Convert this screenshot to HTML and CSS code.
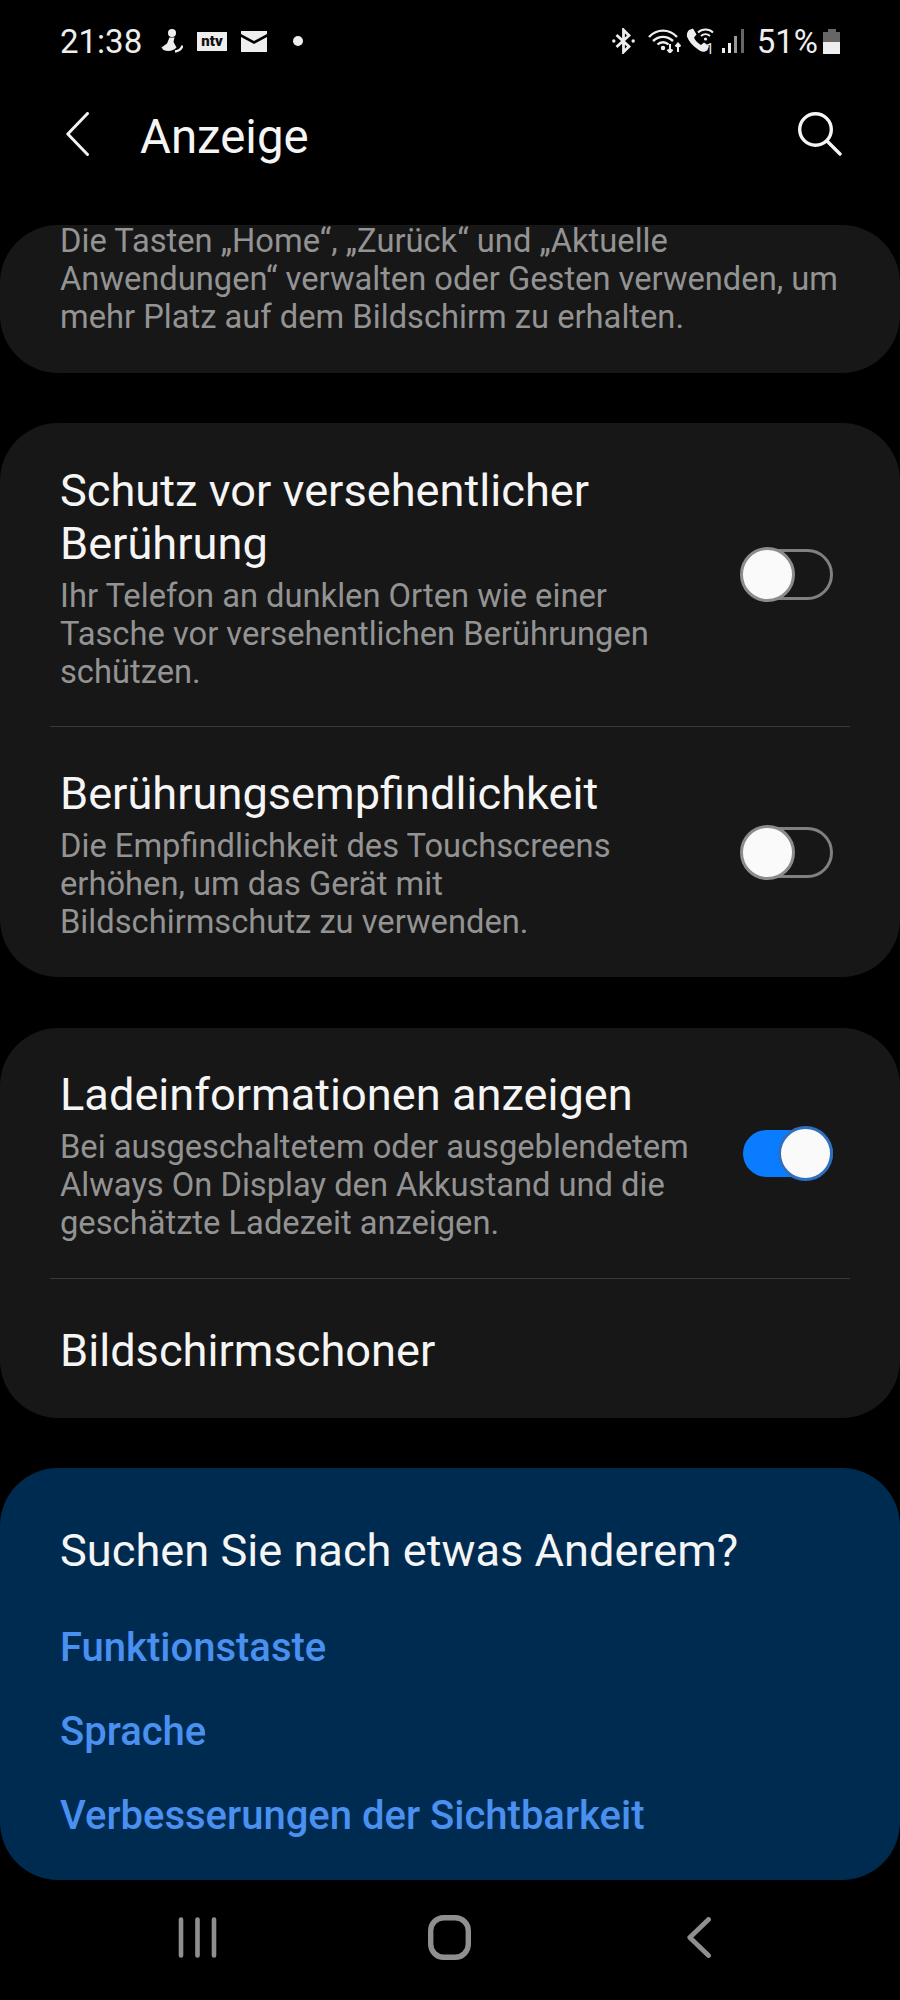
FILE: index.html
```html
<!DOCTYPE html>
<html lang="de">
<head>
  <meta charset="UTF-8">
  <title>Anzeige</title>
  <meta name="viewport" content="width=device-width, initial-scale=1.0">
  <link rel="stylesheet" href="styles.css">
</head>
<body>
  <div class="phone">
    <!-- Status bar -->
    <div class="status">
      <div class="status-left">
        <span class="clock">21:38</span>
        <svg class="ic-health" viewBox="0 0 22 24" width="22" height="24"><circle cx="11" cy="4" r="4" fill="#eee"/><path d="M8.500 8.500h5L12.500 13l3 5.500c-3 3.500-8.500 4.500-13 2.500L.5 18.500 6 14.500z" fill="#eee"/><path d="M14 22.500c3.500-.5 6.500-2.500 7.500-6" fill="none" stroke="#eee" stroke-width="2.400"/></svg>
        <span class="ntv">ntv</span>
        <svg class="ic-mail" viewBox="0 0 26 21" width="26" height="21"><path d="M0 0h26v3L13 10 0 3z" fill="#eee"/><path d="M0 6l13 7 13-7v15H0z" fill="#eee"/></svg>
        <span class="dot"></span>
      </div>
      <div class="status-right">
        <svg class="ic-bt" viewBox="0 0 23 26" width="23" height="26" fill="none" stroke="#eee" stroke-width="2.800"><path d="M4.500 7L17 18.500 11.500 24V2L17 7.500 4.500 19"/><circle cx="1.800" cy="13" r="1.700" fill="#eee" stroke="none"/><circle cx="21.200" cy="13" r="1.700" fill="#eee" stroke="none"/></svg>
        <svg class="ic-wifi" viewBox="0 0 33 24" width="33" height="24" fill="none" stroke="#eee" stroke-width="2.400"><path d="M1 8c8-8.500 20-8.500 28 0"/><path d="M5 12c6-5.500 14-5.500 20 0"/><path d="M9.500 15.500c3-3 8-3 11 0"/><circle cx="15" cy="19" r="2.200" fill="#eee" stroke="none"/><path d="M22 15v8M19.500 20.500l2.500 3 2.500-3M30 23v-8M27.500 17.500l2.500-3 2.500 3" stroke-width="2"/></svg>
        <div class="call">
          <svg viewBox="0 0 28 24" width="28" height="24"><path d="M3 2l4-1.500 3.500 6-2.500 3c1 3 4 6 7 7.500l3-2.500 5 3.500-1.500 4c-2 2-5 2.500-8 .5C8 19 3 14 1 8.500 .5 6 1.500 3.500 3 2z" fill="#eee"/><g fill="none" stroke="#eee" stroke-width="1.800"><path d="M12 4.500c4-4 11-4 15 0"/><path d="M15 8c2.500-2.500 6.500-2.500 9 0"/></g><circle cx="19.500" cy="11" r="1.600" fill="#eee"/></svg>
          <span class="sim">1</span>
        </div>
        <div class="signal">
          <i class="bar b1"></i><i class="bar b2"></i><i class="bar b3"></i><i class="bar b4"></i>
        </div>
        <span class="pct">51%</span>
        <div class="battery"><i class="cap"></i><i class="cell-top"></i><i class="cell-low"></i></div>
      </div>
    </div>

    <!-- Header -->
    <div class="header">
      <svg class="back" viewBox="0 0 23 44" width="23" height="44" fill="none" stroke="#f2f2f2" stroke-width="3" stroke-linecap="round" stroke-linejoin="round"><path d="M21.500 1.500L1.800 22l19.700 20.500"/></svg>
      <h1>Anzeige</h1>
      <svg class="search" viewBox="0 0 44 44" width="44" height="44" fill="none" stroke="#f5f5f5" stroke-width="3.400" stroke-linecap="round"><circle cx="17.500" cy="17.500" r="15.800"/><path d="M29 29l13 13"/></svg>
    </div>

    <div class="list">
      <div class="card card-top">
        <p class="sub">Die Tasten „Home“, „Zurück“ und „Aktuelle Anwendungen“ verwalten oder Gesten verwenden, um mehr Platz auf dem Bildschirm zu erhalten.</p>
      </div>

      <div class="card">
        <div class="row row-a">
          <div class="row-text">
            <div class="title">Schutz vor versehentlicher Berührung</div>
            <p class="sub">Ihr Telefon an dunklen Orten wie einer Tasche vor versehentlichen Berührungen schützen.</p>
          </div>
          <div class="switch"><span class="knob"></span></div>
        </div>
        <div class="divider"></div>
        <div class="row row-b">
          <div class="row-text">
            <div class="title">Berührungsempfindlichkeit</div>
            <p class="sub">Die Empfindlichkeit des Touchscreens erhöhen, um das Gerät mit Bildschirmschutz zu verwenden.</p>
          </div>
          <div class="switch"><span class="knob"></span></div>
        </div>
      </div>

      <div class="card card-charge">
        <div class="row row-c">
          <div class="row-text">
            <div class="title">Ladeinformationen anzeigen</div>
            <p class="sub">Bei ausgeschaltetem oder ausgeblendetem Always On Display den Akkustand und die geschätzte Ladezeit anzeigen.</p>
          </div>
          <div class="switch on"><span class="knob"></span></div>
        </div>
        <div class="divider"></div>
        <div class="row row-d">
          <div class="title">Bildschirmschoner</div>
        </div>
      </div>

      <div class="card card-blue">
        <div class="title">Suchen Sie nach etwas Anderem?</div>
        <a class="link">Funktionstaste</a>
        <a class="link">Sprache</a>
        <a class="link">Verbesserungen der Sichtbarkeit</a>
      </div>
    </div>

    <!-- Nav bar -->
    <div class="nav">
      <svg viewBox="0 0 39 41" width="39" height="41" fill="none" stroke="#8f8f8f" stroke-width="4.600" stroke-linecap="round"><path d="M3 2.500v36M19.500 2.500v36M36 2.500v36"/></svg>
      <svg class="nav-home" viewBox="0 0 43 45" width="43" height="45" fill="none" stroke="#8f8f8f" stroke-width="5.400"><rect x="2.700" y="2.700" width="37.600" height="39.600" rx="13"/></svg>
      <svg class="nav-back" viewBox="0 0 24 41" width="24" height="41" fill="none" stroke="#8f8f8f" stroke-width="4.800" stroke-linecap="round" stroke-linejoin="round"><path d="M21.500 2.500L2.800 20.500l18.700 18"/></svg>
    </div>
  </div>
</body>
</html>
```

FILE: styles.css
```css
* { box-sizing: border-box; }
body { margin: 0; background: #000; font-family: Roboto, "Liberation Sans", sans-serif; color: #f5f5f5; }
.phone { width: 900px; height: 2000px; background: #000; overflow: hidden; display: flex; flex-direction: column; }

.status { height: 80px; padding: 2px 60px 0 60px; display: flex; justify-content: space-between; align-items: center; }
.status-left, .status-right { display: flex; align-items: center; }
.clock { font-size: 33px; color: #eee; width: 80px; margin-right: 21px; }
.ic-health { margin-right: 14px; }
.ntv { width: 30px; height: 19px; background: #eee; color: #111; font-size: 15px; font-weight: 900; line-height: 19px; text-align: center; margin-right: 14px; }
.ic-mail { margin-right: 26px; }
.dot { width: 10px; height: 10px; border-radius: 50%; background: #eee; }

.status-right svg { flex: none; }
.ic-wifi { margin-left: 13px; }
.call { position: relative; width: 28px; height: 26px; margin-left: 5px; }
.sim { position: absolute; right: 0; bottom: -3px; font-size: 14px; color: #eee; }
.signal { display: flex; align-items: flex-end; gap: 3.300px; height: 24px; margin-left: 8px; }
.bar { width: 3px; background: #eee; display: block; }
.b1 { height: 5px; }
.b2 { height: 10px; }
.b3 { height: 17px; background: #999; }
.b4 { height: 24px; background: #666; }
.pct { font-size: 33px; color: #eee; margin-left: 13px; }
.battery { width: 17px; height: 25px; margin-left: 5px; display: flex; flex-direction: column; align-items: center; }
.cap { width: 8px; height: 3px; background: #666; display: block; }
.cell-top { width: 17px; height: 10px; background: #666; display: block; }
.cell-low { width: 17px; height: 12px; background: #eee; display: block; }

.header { height: 96px; padding: 12px 58px 0 66px; display: flex; align-items: center; }
.header h1 { margin: 0 0 0 51px; padding-top: 5px; font-size: 47.400px; font-weight: 400; color: #f5f5f5; flex: 1; }

.list { flex: 1; display: flex; flex-direction: column; gap: 50px; padding-top: 49px; }
.card { background: #171717; border-radius: 58px; flex: none; }
.card-top { height: 148px; padding: 0 56px 0 60px; }
.card-top .sub { margin-top: -3px; }
.card-charge { margin-top: 1px; }

.sub { margin: 7px 0 0; font-size: 32.700px; line-height: 38px; color: #939393; }
.title { font-size: 45.200px; line-height: 53px; color: #f5f5f5; }

.row { display: flex; align-items: center; padding: 0 67px 0 60px; }
.row-text { flex: 1; min-width: 0; }
.row-a { height: 303px; }
.row-a .row-text { padding-top: 5px; }
.row-b { height: 250px; }
.row-b .row-text { padding-top: 4px; }
.row-c { height: 250px; }
.row-c .row-text { padding-top: 4px; }
.row-d { height: 139px; padding-top: 3px; }
.divider { height: 1px; background: #3a3a3a; margin: 0 50px; }

.switch { flex: none; width: 92px; height: 51px; border: 3px solid #808080; border-radius: 26px; display: flex; align-items: center; margin-left: 49px; }
.knob { flex: none; width: 55px; height: 55px; border-radius: 50%; background: #fafafa; border: 3px solid #8c8c8c; margin-left: -4px; }
.switch.on { width: 90px; height: 47px; margin-left: 51px; background: #0a7cff; border: 0; justify-content: flex-end; }
.switch.on .knob { border-color: #2f6fc0; margin-left: 0; }

.card-blue { background: #002b50; height: 412px; padding: 56px 60px 0; display: flex; flex-direction: column; }
.card-blue .title { line-height: 54px; }
.link { font-size: 40px; font-weight: 500; line-height: 50px; color: #4a90f0; margin-top: 34px; }
.card-blue .title + .link { margin-top: 45px; }

.nav { height: 120px; padding: 0 0 6px 178px; display: flex; align-items: center; }
.nav-home { margin-left: 211px; }
.nav-back { margin-left: 216px; }
```
